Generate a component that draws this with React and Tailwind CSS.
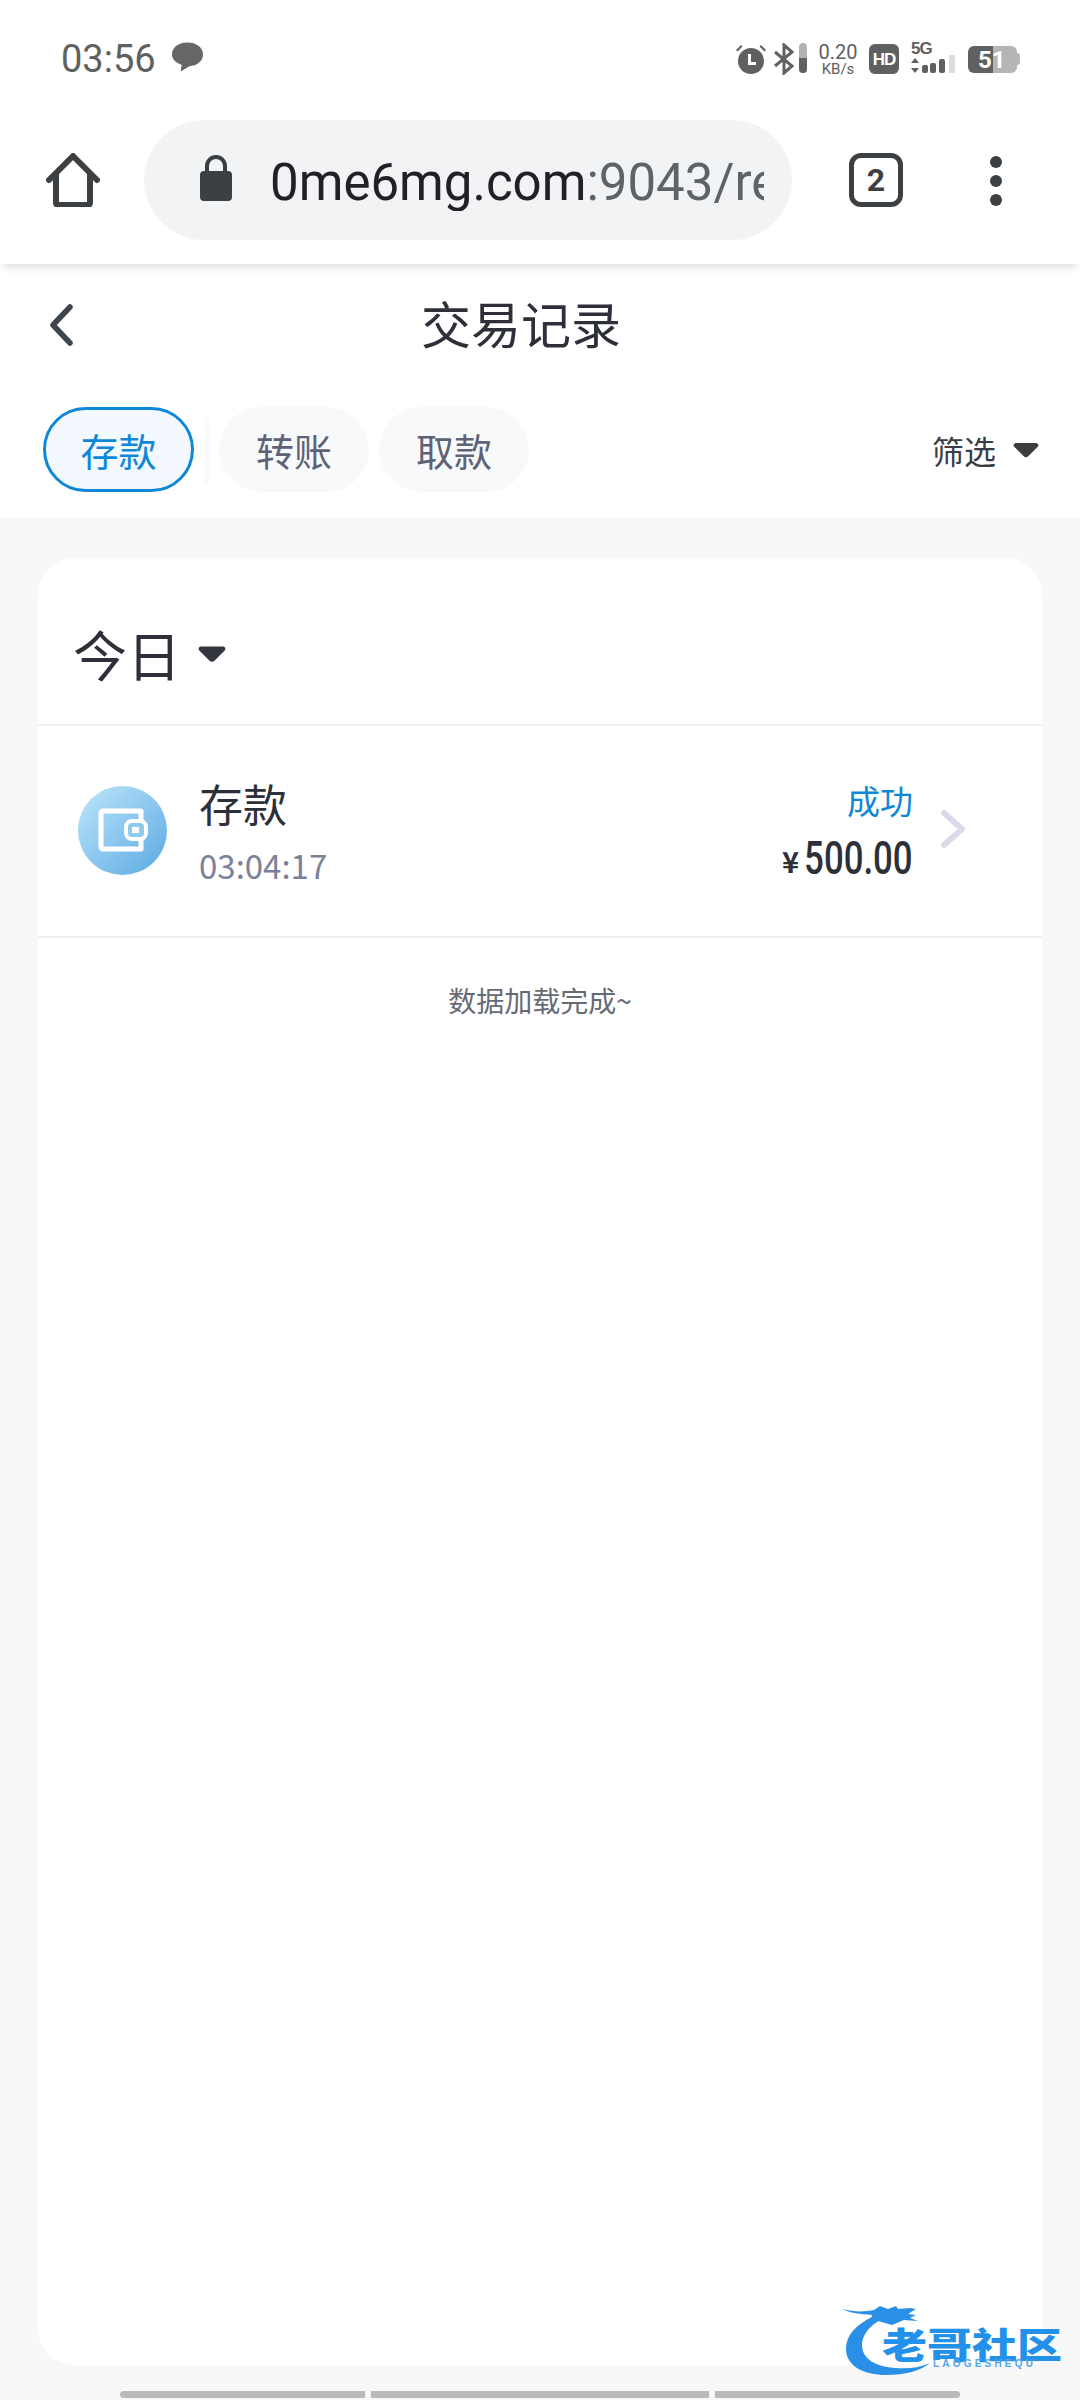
const cjk = "font-['Noto_Sans_CJK_SC','Noto_Sans',sans-serif]";

const tabs = [
  { name: '存款', active: true },
  { name: '转账' },
  { name: '取款' },
];

const Caret = ({ className }) => (
  <svg viewBox="0 0 26 16" className={className} fill="currentColor">
    <path d="M3 1h20c2 0 3 2 2 3.500l-10 10c-1 1-3 1-4 0L1 4.500C0 3 1 1 3 1z" />
  </svg>
);

const StatusBar = () => (
  <div className="h-[120px] flex items-center justify-between pl-[61px] pr-[59px] pb-[2px] text-[#5f6061]">
    <div className="flex items-center gap-[15px]">
      <span className="font-['Roboto',sans-serif] text-[38px] leading-none">03:56</span>
      <svg viewBox="0 0 34 30" className="w-[33px] h-[30px] -mt-[4px]" fill="#666">
        <path d="M17 0c9 0 16 5 16 12.500S26 24 19 24.500L10 30l1-7C5 21 1 17.500 1 12.500 1 5 8 0 17 0z" />
      </svg>
    </div>
    <div className="flex items-center">
      {/* alarm */}
      <svg viewBox="0 0 32 32" className="w-[32px] h-[32px]" fill="#5f6061">
        <circle cx="16" cy="18" r="13" />
        <path d="M1 7l5-5 1.500 1.500-5 5zM31 7l-5-5-1.500 1.500 5 5z" />
        <path d="M13 11h3v8h5v3h-8z" fill="#fff" />
      </svg>
      {/* bluetooth + level */}
      <svg viewBox="0 0 36 32" className="w-[36px] h-[32px] ml-[6px]">
        <path d="M2 9l17 14-8 7V2l8 7L2 23" fill="none" stroke="#5f6061" strokeWidth="3" />
        <rect x="26" y="0" width="8" height="30" rx="4" fill="#b3b3b3" />
        <path d="M26 15h8v11a4 4 0 0 1-8 0z" fill="#5f6061" />
      </svg>
      <div className="ml-[9px] w-[40px] flex flex-col items-center font-['Roboto',sans-serif] leading-none">
        <span className="text-[20px] leading-[20px]">0.20</span>
        <span className="text-[15px] leading-[15px]">KB/s</span>
      </div>
      <div className="ml-[11px] w-[30px] h-[30px] rounded-[6px] bg-[#5f6061] text-white flex items-center justify-center font-['Liberation_Sans',sans-serif] font-bold text-[17px] tracking-[-1px] leading-none">HD</div>
      {/* 5G signal */}
      <div className="ml-[12px] relative w-[44px] h-[32px]">
        <span className="absolute left-0 -top-[3px] font-['Liberation_Sans',sans-serif] font-bold text-[17px] tracking-[-1px] leading-none">5G</span>
        <svg viewBox="0 0 44 32" className="w-[44px] h-[32px]">
          <path d="M4 15l4 5H0zM4 30l4-5H0z" fill="#5f6061" />
          <rect x="11" y="22" width="6" height="8" rx="2" fill="#5f6061" />
          <rect x="19" y="20" width="6" height="10" rx="2" fill="#5f6061" />
          <rect x="28" y="16" width="6" height="14" rx="2" fill="#5f6061" />
          <rect x="38" y="12" width="6" height="18" fill="#dcdcdc" />
        </svg>
      </div>
      {/* battery */}
      <div className="ml-[13px] relative w-[53px] h-[27px] flex">
        <div className="w-[25px] bg-[#5f6061] rounded-l-[6px]" />
        <div className="w-[24px] bg-[#b5b5b5] rounded-r-[6px]" />
        <div className="w-[3px] h-[12px] self-center bg-[#b5b5b5] rounded-r-[3px]" />
        <span className="absolute left-[10px] top-[2px] font-['Roboto',sans-serif] font-bold text-[24px] leading-[24px] text-white">51</span>
      </div>
    </div>
  </div>
);

const Toolbar = () => (
  <div className="h-[144px] flex items-start pl-[46px] relative z-10 bg-white shadow-[0_8px_8px_-4px_rgba(0,0,0,0.12)]">
    <svg viewBox="0 0 54 54" className="w-[54px] h-[54px] mt-[33px]" fill="none" stroke="#3c4043" strokeWidth="6" strokeLinejoin="round" strokeLinecap="round">
      <path d="M3 27L27 3l24 24" />
      <path d="M10 21v29a2 2 0 0 0 2 2h30a2 2 0 0 0 2-2V21" />
    </svg>
    <div className="ml-[44px] w-[648px] h-[120px] rounded-full bg-[#f1f3f4] flex items-center pl-[55px]">
      <svg viewBox="0 0 34 46" className="w-[34px] h-[46px] shrink-0 -mt-[4px]" fill="#3c4043">
        <path d="M8 18v-7a9 9 0 0 1 18 0v7" fill="none" stroke="#3c4043" strokeWidth="4" />
        <rect x="1" y="16" width="32" height="30" rx="4" />
      </svg>
      <div className="ml-[37px] mt-[5px] w-[494px] overflow-hidden whitespace-nowrap font-['Roboto',sans-serif] text-[51px] leading-[56px] text-[#202124]">
        0me6mg.com<span className="text-[#5f6368]">:9043/records/deposit</span>
      </div>
    </div>
    <div className="ml-[57px] mt-[33px] w-[54px] h-[54px] rounded-[12px] border-[5px] border-[#3c4043] flex items-center justify-center font-['Roboto',sans-serif] font-bold text-[32px] leading-none text-[#3c4043]">2</div>
    <div className="ml-[87px] mt-[36px] flex flex-col gap-[7px]">
      <div className="w-[12px] h-[12px] rounded-full bg-[#3c4043]" />
      <div className="w-[12px] h-[12px] rounded-full bg-[#3c4043]" />
      <div className="w-[12px] h-[12px] rounded-full bg-[#3c4043]" />
    </div>
  </div>
);

const WalletBadge = () => (
  <div className="w-[89px] h-[89px] -mt-[2px] rounded-full bg-gradient-to-br from-[#bfe6f9] to-[#58a9e2] flex items-center justify-center shrink-0">
    <svg viewBox="0 0 50 44" className="w-[50px] h-[44px]">
      <path d="M5 3h38v38H5a2 2 0 0 1-2-2V5a2 2 0 0 1 2-2z" fill="none" stroke="#fff" strokeWidth="5" strokeLinejoin="round" />
      <rect x="28" y="13" width="20" height="18" rx="6" fill="#8fcbee" stroke="#fff" strokeWidth="4" />
      <rect x="34" y="19" width="7" height="6" fill="#fff" />
    </svg>
  </div>
);

const Watermark = () => (
  <div className="absolute left-[842px] top-[2303px] w-[224px] h-[74px]">
    <svg viewBox="0 0 224 74" className="absolute inset-0 w-full h-full">
      <path d="M30 14C14 22 4 32 4 46c0 17 18 26 40 26 20 0 34-4 44-12-12 5-22 6-34 5C34 64 20 56 20 42c0-10 8-20 20-26z" fill="#2a8fe6" />
      <path d="M0 6c12 3 22 3 32 1l6-4 8 3 8-3 2 3 12-1 6 1-8 5 8 1-6 3 8 3-14-1-12 5-14-4-8 3 2-9C18 11 8 10 0 6z" fill="#2a8fe6" />
    </svg>
    <div className={`absolute left-[40px] top-[18px] whitespace-nowrap ${cjk} font-black text-[45px] leading-[45px] text-[#2391ea] scale-y-[0.8]`}>老哥社区</div>
    <div className="absolute left-[91px] top-[56px] whitespace-nowrap font-['Liberation_Sans',sans-serif] font-bold text-[10px] leading-[10px] tracking-[3.200px] text-[#4fa6ee]">LAOGESHEQU</div>
  </div>
);

const TransactionRow = () => (
  <div className="h-[212px] flex items-center pl-[40px] pr-[129px] border-b-2 border-[#f0f1f3]">
    <WalletBadge />
    <div className="ml-[32px] mb-[5px] flex flex-col">
      <span className="text-[44px] leading-[60px] text-[#2d3039]">存款</span>
      <span className="text-[33px] leading-[40px] mt-[12px] text-[#7b8198]">03:04:17</span>
    </div>
    <div className="ml-auto flex flex-col items-end relative">
      <span className="text-[33px] leading-[46px] -mt-[1px] text-[#0f87d8]">成功</span>
      <div className="flex items-center h-[52px] mt-[9px]">
        <span className="text-[29px] leading-none text-[#2d3039] mr-[4px] mt-[4px] font-bold">¥</span>
        <div className="w-[110px] flex justify-end">
          <span className="shrink-0 font-['Roboto',sans-serif] font-medium text-[47px] leading-[50px] text-[#2d3039] whitespace-nowrap scale-x-[0.74] origin-right">500.00</span>
        </div>
      </div>
      <svg viewBox="0 0 24 38" className="absolute -right-[52px] top-[32px] w-[24px] h-[38px]" fill="none" stroke="#d9dbe8" strokeWidth="6" strokeLinecap="round" strokeLinejoin="round">
        <path d="M3 3l18 16L3 35" />
      </svg>
    </div>
  </div>
);

export default function App() {
  return (
    <div className={`relative w-[1080px] h-[2400px] overflow-hidden bg-[#f8f8f8] ${cjk}`}>
      <div className="bg-white">
        <StatusBar />
        <Toolbar />
        {/* Page header */}
        <div className="h-[126px] flex items-center justify-center relative pr-[38px]">
          <svg viewBox="0 0 24 42" className="absolute left-[49px] top-[40px] w-[24px] h-[42px]" fill="none" stroke="#3f4550" strokeWidth="5.500" strokeLinecap="round" strokeLinejoin="round">
            <path d="M21 3L4 21l17 18" />
          </svg>
          <span className="text-[50px] leading-none text-[#2d3039] pb-[10px]">交易记录</span>
        </div>
        {/* Tabs */}
        <div className="h-[127px] flex items-start pl-[43px] pr-[41px] pt-[17px]">
          {tabs.map((tab, i) => (
            <div key={tab.name} className="flex items-center">
              <div
                className={`h-[85px] rounded-full flex items-center justify-center text-[38px] leading-none ${
                  tab.active
                    ? 'w-[151px] bg-[#f3f9fe] border-[3px] border-[#0f87d8] text-[#0f87d8]'
                    : 'w-[150px] bg-[#f8f9fb] text-[#5d6276]'
                }`}
              >
                {tab.name}
              </div>
              {i === 0 && <div className="w-[5px] h-[66px] mx-[10px] bg-[#fafafa]" />}
              {i === 1 && <div className="w-[10px]" />}
            </div>
          ))}
          <div className="ml-auto h-[85px] flex items-center text-[32px] leading-none text-[#3a3d44]">
            <span>筛选</span>
            <Caret className="w-[26px] h-[16px] ml-[17px] text-[#3d3d3d]" />
          </div>
        </div>
      </div>

      {/* Record card */}
      <div className="mx-[38px] mt-[41px] h-[1807px] bg-white rounded-[36px] flex flex-col">
        <div className="h-[168px] flex items-center pl-[35px] pt-[25px] border-b-2 border-[#f0f1f3]">
          <span className="text-[54px] leading-none text-[#2d3039]">今日</span>
          <Caret className="w-[28px] h-[18px] ml-[17px] text-[#33363d]" />
        </div>
        <TransactionRow />
        <div className="pt-[44px] text-center text-[28px] leading-[36px] text-[#666a75]">数据加载完成~</div>
      </div>

      {/* Scroll bars at bottom */}
      <div className="mt-[26px] ml-[120px] w-[840px] flex gap-[6px]">
        <div className="w-[245px] h-[7px] bg-[#b9b9b9] rounded-l-full" />
        <div className="w-[338px] h-[7px] bg-[#b9b9b9]" />
        <div className="w-[245px] h-[7px] bg-[#b9b9b9] rounded-r-full" />
      </div>

      <Watermark />
    </div>
  );
}
